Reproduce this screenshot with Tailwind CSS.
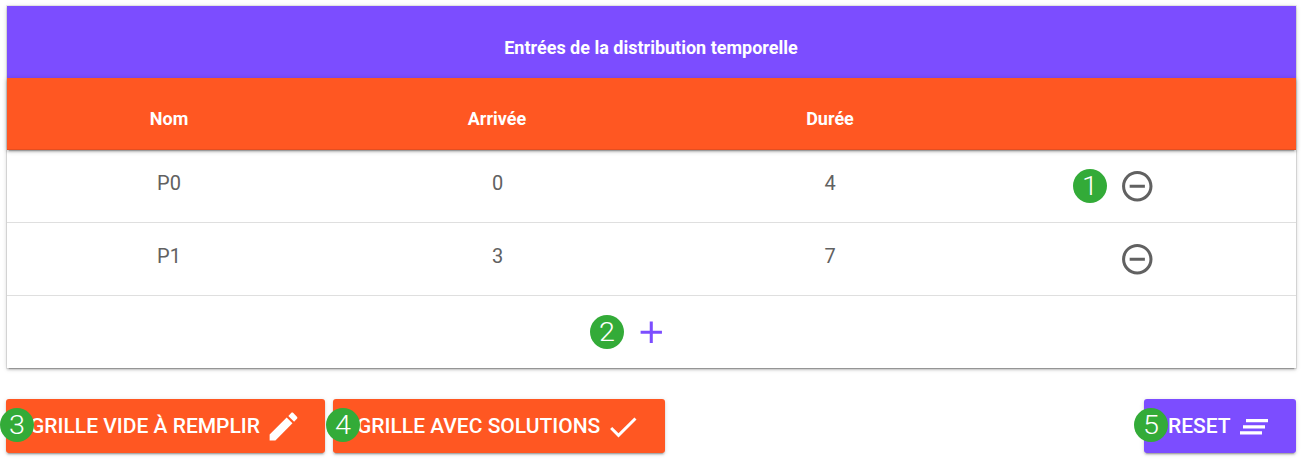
<!DOCTYPE html>
<html lang="fr">
<head>
<meta charset="utf-8">
<title>Distribution temporelle</title>
<script src="https://cdn.jsdelivr.net/npm/@tailwindcss/browser@4"></script>
</head>
<body class="h-[464px] overflow-hidden bg-white font-['Roboto',sans-serif] pt-[6px] pl-[7px]">
<main class="w-[1289px]">
  <section class="bg-white text-[20px] text-[#616161] shadow-[0_2px_2px_0_rgba(0,0,0,0.14),0_3px_1px_-2px_rgba(0,0,0,0.2),0_1px_5px_0_rgba(0,0,0,0.16),0_0_0_1px_rgba(0,0,0,0.07)]">
    <div class="flex h-[72px] items-center justify-center bg-[#7c4dff] pt-[11px] pr-px text-[18px] font-bold text-white">Entrées de la distribution temporelle</div>
    <div class="relative grid h-[72px] grid-cols-[324px_332px_334px_281px] items-center border-b border-[#e64e1f] bg-[#ff5722] pt-[10px] text-center text-[18px] font-bold text-white shadow-[0_2px_2px_0_rgba(0,0,0,0.14),0_3px_1px_-2px_rgba(0,0,0,0.2),0_1px_5px_0_rgba(0,0,0,0.2)]">
      <span>Nom</span><span>Arrivée</span><span>Durée</span>
    </div>
    <div class="grid h-[73px] grid-cols-[324px_332px_334px_281px] items-center border-b border-[#dfdfdf] text-center">
      <span class="pb-[6px]">P0</span><span class="pb-[6px] pl-px">0</span><span class="pb-[6px]">4</span>
      <span class="relative flex justify-center pr-px">
        <b class="absolute left-[76px] top-[1px] flex size-[34px] items-center justify-center rounded-full bg-[#33ab38] pt-[2px] text-[25px] font-light text-white"><span class="scale-x-115">1</span></b>
        <svg class="size-[37px]" viewBox="0 0 24.300 24.300" fill="currentColor"><path d="M7 11v2h10v-2H7zm5-9C6.480 2 2 6.480 2 12s4.480 10 10 10 10-4.480 10-10S17.520 2 12 2zm0 18c-4.410 0-8-3.590-8-8s3.590-8 8-8 8 3.590 8 8-3.590 8-8 8z"/></svg>
      </span>
    </div>
    <div class="grid h-[73px] grid-cols-[324px_332px_334px_281px] items-center border-b border-[#dfdfdf] text-center">
      <span class="pb-[6px]">P1</span><span class="pb-[6px] pl-px">3</span><span class="pb-[6px]">7</span>
      <span class="flex justify-center pr-px">
        <svg class="size-[37px]" viewBox="0 0 24.300 24.300" fill="currentColor"><path d="M7 11v2h10v-2H7zm5-9C6.480 2 2 6.480 2 12s4.480 10 10 10 10-4.480 10-10S17.520 2 12 2zm0 18c-4.410 0-8-3.590-8-8s3.590-8 8-8 8 3.590 8 8-3.590 8-8 8z"/></svg>
      </span>
    </div>
    <div class="relative flex h-[72px] items-center justify-center pr-px text-[#7c4dff]">
      <b class="absolute left-[583px] top-[19px] flex size-[34px] items-center justify-center rounded-full bg-[#33ab38] pt-[2px] text-[25px] font-light text-white"><span class="scale-x-115">2</span></b>
      <svg class="size-[37px]" viewBox="0 0 24.300 24.300" fill="currentColor"><path d="M19 13h-6v6h-2v-6H5v-2h6V5h2v6h6v2z"/></svg>
    </div>
  </section>
  <nav class="mt-[31px] -ml-px flex text-[21px] font-medium text-white">
    <button class="relative flex h-[54px] w-[319px] items-center rounded-[3px] bg-[#ff5722] pl-[24px] shadow-[0_2px_2px_0_rgba(0,0,0,0.14),0_3px_1px_-2px_rgba(0,0,0,0.2),0_1px_5px_0_rgba(0,0,0,0.12)]">
      <b class="absolute -left-[6px] top-[9px] flex size-[34px] items-center justify-center rounded-full bg-[#33ab38] pt-[2px] text-[25px] font-light"><span class="scale-x-115">3</span></b>
      <span class="w-[235px] whitespace-nowrap pt-[2px] text-left">GRILLE VIDE À REMPLIR</span>
      <svg class="mt-px size-[37px]" viewBox="0 0 24 24" fill="currentColor"><path d="M3 17.250V21h3.750L17.810 9.940l-3.750-3.750L3 17.250zM20.710 7.040c.39-.39.39-1.020 0-1.410l-2.340-2.340c-.39-.39-1.020-.39-1.410 0l-1.830 1.830 3.750 3.750 1.830-1.830z"/></svg>
    </button>
    <button class="relative ml-2 flex h-[54px] w-[332px] items-center rounded-[3px] bg-[#ff5722] pl-[24px] shadow-[0_2px_2px_0_rgba(0,0,0,0.14),0_3px_1px_-2px_rgba(0,0,0,0.2),0_1px_5px_0_rgba(0,0,0,0.12)]">
      <b class="absolute -left-[7px] top-[9px] flex size-[34px] items-center justify-center rounded-full bg-[#33ab38] pt-[2px] text-[25px] font-light"><span class="scale-x-115">4</span></b>
      <span class="w-[248px] whitespace-nowrap pt-[2px] text-left">GRILLE AVEC SOLUTIONS</span>
      <svg class="mt-[2px] size-[36px]" viewBox="0 0 24 24" fill="currentColor"><path d="M9 16.200L4.800 12l-1.400 1.400L9 19 21 7l-1.400-1.400L9 16.200z"/></svg>
    </button>
    <button class="relative ml-auto flex h-[54px] w-[152px] items-center rounded-[3px] bg-[#7c4dff] pl-[24px] shadow-[0_2px_2px_0_rgba(0,0,0,0.14),0_3px_1px_-2px_rgba(0,0,0,0.2),0_1px_5px_0_rgba(0,0,0,0.12)]">
      <b class="absolute -left-[10px] top-[9px] flex size-[34px] items-center justify-center rounded-full bg-[#33ab38] pt-[2px] text-[25px] font-light"><span class="scale-x-115">5</span></b>
      <span class="w-[68px] pt-[2px] text-left">RESET</span>
      <svg class="size-9" viewBox="0 0 36 36" fill="currentColor"><path d="M10 11h22v3.300H10zM7 17.200h22v3.300H7zM4 23.300h22v3.300H4z"/></svg>
    </button>
  </nav>
</main>
</body>
</html>
